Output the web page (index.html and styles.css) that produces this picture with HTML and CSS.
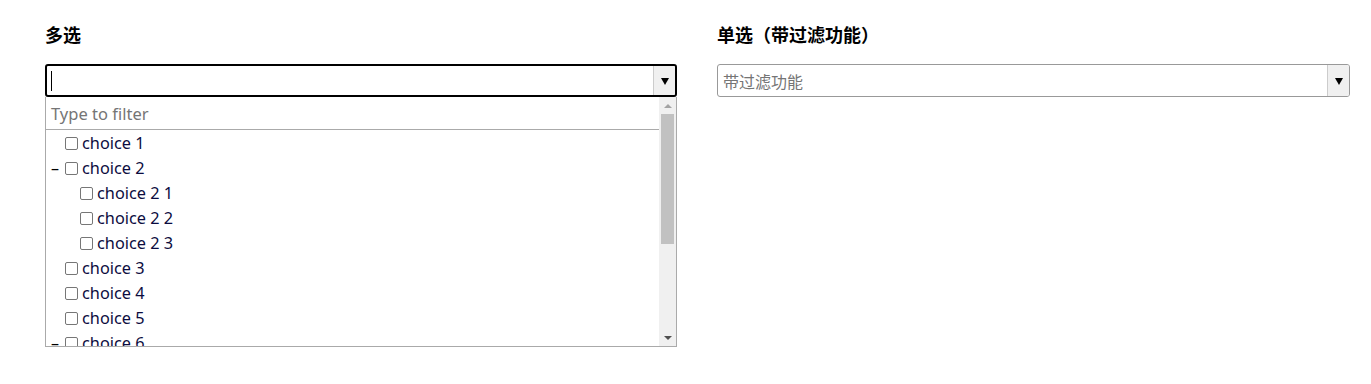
FILE: index.html
```html
<!DOCTYPE html>
<html lang="zh">
<head>
<meta charset="utf-8">
<link rel="stylesheet" href="styles.css">
</head>
<body>
<div class="page">
  <section class="field">
    <h3 class="label">多选</h3>
    <div class="combo combo-focus">
      <div class="combo-input"><span class="caret"></span></div>
      <div class="toggle"><span class="tri"></span></div>
    </div>
    <div class="dropdown">
      <div class="dd-content">
        <div class="filter">Type to filter</div>
        <ul class="tree">
          <li class="row"><span class="exp"></span><span class="cb"></span><span class="txt">choice 1</span></li>
          <li class="row"><span class="exp">–</span><span class="cb"></span><span class="txt">choice 2</span></li>
          <li class="row lvl2"><span class="exp"></span><span class="cb"></span><span class="txt">choice 2 1</span></li>
          <li class="row lvl2"><span class="exp"></span><span class="cb"></span><span class="txt">choice 2 2</span></li>
          <li class="row lvl2"><span class="exp"></span><span class="cb"></span><span class="txt">choice 2 3</span></li>
          <li class="row"><span class="exp"></span><span class="cb"></span><span class="txt">choice 3</span></li>
          <li class="row"><span class="exp"></span><span class="cb"></span><span class="txt">choice 4</span></li>
          <li class="row"><span class="exp"></span><span class="cb"></span><span class="txt">choice 5</span></li>
          <li class="row"><span class="exp">–</span><span class="cb"></span><span class="txt">choice 6</span></li>
        </ul>
      </div>
      <div class="scrollbar">
        <div class="sb-btn"><span class="sb-up"></span></div>
        <div class="sb-track"><div class="sb-thumb"></div></div>
        <div class="sb-btn"><span class="sb-down"></span></div>
      </div>
    </div>
  </section>
  <section class="field">
    <h3 class="label">单选（带过滤功能）</h3>
    <div class="combo">
      <div class="combo-input"><span class="placeholder">带过滤功能</span></div>
      <div class="toggle"><span class="tri"></span></div>
    </div>
  </section>
</div>
</body>
</html>
```

FILE: styles.css
```css
* { box-sizing: border-box; }
body {
  margin: 0;
  background: #fff;
  font-family: "Noto Sans", "Noto Sans CJK SC", sans-serif;
  color: #000;
}
.page {
  display: grid;
  grid-template-columns: 632px 633px;
  column-gap: 40px;
  padding: 22px 0 0 45px;
}
.label {
  margin: 0 0 18px;
  font-size: 18px;
  line-height: 24px;
  font-weight: 700;
  font-family: "Noto Sans CJK SC", sans-serif;
}
.combo {
  display: flex;
  height: 33px;
  border: 1px solid #999;
  border-radius: 3px;
  background: #fff;
}
.combo-focus {
  border: 2px solid #000;
}
.combo-input {
  flex: 1;
  display: flex;
  align-items: center;
  padding-left: 5px;
}
.combo-focus .combo-input { padding-left: 4px; }
.caret {
  width: 1px;
  height: 20px;
  background: #000;
}
.placeholder {
  font-family: "Noto Sans CJK SC", sans-serif;
  font-size: 16px;
  color: #757575;
}
.toggle {
  width: 22px;
  background: #f0f0f0;
  border-left: 1px solid #ccc;
  display: flex;
  align-items: center;
  justify-content: center;
  border-radius: 0 2px 2px 0;
}
.tri {
  width: 0;
  height: 0;
  border-left: 4px solid transparent;
  border-right: 4px solid transparent;
  border-top: 7px solid #000;
  margin-top: 1px;
}
.dropdown {
  display: flex;
  height: 250px;
  border: 1px solid #aaa;
  border-top: 0;
}
.dd-content {
  flex: 1;
  overflow: hidden;
}
.filter {
  height: 33px;
  border-bottom: 1px solid #aaa;
  padding-left: 5px;
  display: flex;
  align-items: center;
  font-size: 16.5px;
  color: #757575;
}
.tree {
  list-style: none;
  margin: 0;
  padding: 0;
}
.row {
  display: flex;
  align-items: center;
  height: 25px;
  padding-left: 4px;
  font-size: 16.3px;
  color: #0c0c40;
}
.row.lvl2 { padding-left: 19px; }
.exp {
  width: 15px;
  font-size: 16px;
  line-height: 1;
  color: #000;
  padding-left: 1px;
}
.cb {
  width: 13px;
  height: 13px;
  border: 1px solid #767676;
  border-radius: 2px;
  background: #fff;
  margin-right: 4px;
  margin-top: 2px;
}
.txt { white-space: nowrap; }
.scrollbar {
  width: 17px;
  background: #f0f0f0;
  display: flex;
  flex-direction: column;
}
.sb-btn {
  height: 17px;
  display: flex;
  align-items: center;
  justify-content: center;
}
.sb-up {
  width: 0; height: 0;
  border-left: 4px solid transparent;
  border-right: 4px solid transparent;
  border-bottom: 4px solid #a3a3a3;
}
.sb-down {
  width: 0; height: 0;
  border-left: 4px solid transparent;
  border-right: 4px solid transparent;
  border-top: 4px solid #505050;
}
.sb-track {
  flex: 1;
  padding: 0 2px;
}
.sb-thumb {
  height: 130px;
  background: #c1c1c1;
}
```
